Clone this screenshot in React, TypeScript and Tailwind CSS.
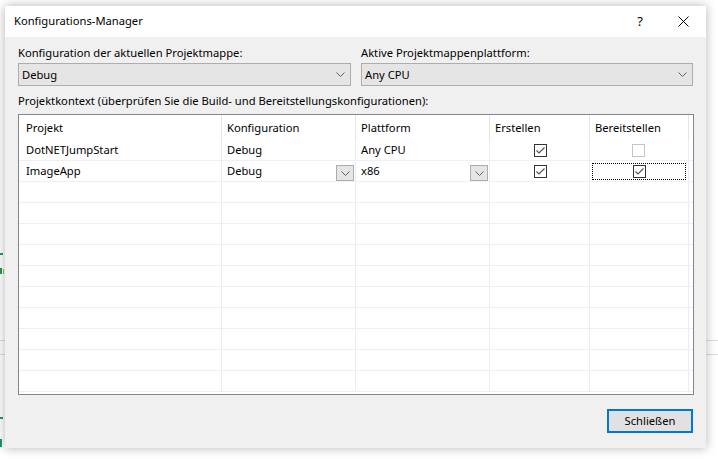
import React from "react";

const font = { fontFamily: '"Noto Sans", "Segoe UI", Arial, sans-serif' };

function Chevron({ className = "" }: { className?: string }) {
  return (
    <svg width="9" height="5" viewBox="0 0 9 5" className={className}>
      <path d="M0.5 0.5 L4.5 4.5 L8.5 0.5" fill="none" stroke="#606060" strokeWidth="1" />
    </svg>
  );
}

function Combo({ value }: { value: string }) {
  return (
    <div className="flex h-[23px] items-center justify-between border border-[#adadad] bg-[#e5e5e5] pl-[3px] pr-[5px] text-black">
      <span>{value}</span>
      <Chevron />
    </div>
  );
}

function Check({ checked, disabled }: { checked: boolean; disabled?: boolean }) {
  return (
    <div
      className={
        disabled
          ? "flex h-[13px] w-[13px] items-center justify-center border border-[#c4c4c4] bg-white"
          : "flex h-[13px] w-[13px] items-center justify-center border border-[#333333] bg-white"
      }
    >
      {checked && (
        <svg width="11" height="11" viewBox="0 0 11 11">
          <path d="M1.5 5.5 L4 8 L9.5 2.5" fill="none" stroke="#555555" strokeWidth="1.2" />
        </svg>
      )}
    </div>
  );
}

function CellDrop() {
  return (
    <div className="mt-[4px] flex h-[16px] w-[18px] items-center justify-center self-start border border-[#adadad] bg-[#e5e5e5]">
      <Chevron />
    </div>
  );
}

const rowGrid = "grid grid-cols-[203px_134px_134px_100px_99px_4px]";

export default function App() {
  const emptyRows = Array.from({ length: 10 });

  return (
    <div className="relative h-[459px] w-[718px] overflow-hidden bg-white" style={font}>
      {/* Reste des Fensters hinter dem Dialog */}
      <div className="absolute left-0 top-[340px] h-px w-[718px] bg-[#dcdcdc]" />
      <div className="absolute left-0 top-[354px] h-px w-[718px] bg-[#dcdcdc]" />
      <div className="absolute left-0 top-[253px] h-[2px] w-[3px] bg-[#1a9a6a]" />
      <div className="absolute left-0 top-[268px] h-[6px] w-[2px] bg-[#1a9a6a]" />
      <div className="absolute left-[3px] top-[269px] h-[5px] w-[1px] bg-[#d8b020]" />
      <div className="absolute left-0 top-[417px] h-[2px] w-[3px] bg-[#1a9a6a]" />
      <div className="absolute left-0 top-[439px] h-[8px] w-[2px] bg-[#1a9a6a]" />

      <div className="absolute left-[5px] top-[6px] flex h-[442px] w-[701px] flex-col bg-[#f0f0f0] text-[11.2px] shadow-[0_0_10px_rgba(0,0,0,0.3)]">
        <div className="flex h-[31px] items-center justify-between bg-white pl-[9px] pr-[17px] text-black">
          <span>Konfigurations-Manager</span>
          <div className="flex items-center gap-[35px]">
            <span className="text-[13px]">?</span>
            <svg width="11" height="11" viewBox="0 0 11 11">
              <path d="M0.5 0.5 L10.5 10.5 M10.5 0.5 L0.5 10.5" stroke="#000" strokeWidth="1" />
            </svg>
          </div>
        </div>

        <div className="flex flex-col px-[13px] pt-[8px] leading-[16px] text-black">
          <div className="flex gap-[10px]">
            <div className="flex w-[333px] flex-col gap-[2px]">
              <span>Konfiguration der aktuellen Projektmappe:</span>
              <Combo value="Debug" />
            </div>
            <div className="flex w-[332px] flex-col gap-[2px]">
              <span>Aktive Projektmappenplattform:</span>
              <Combo value="Any CPU" />
            </div>
          </div>

          <span className="mt-[7px]">
            Projektkontext (überprüfen Sie die Build- und Bereitstellungskonfigurationen):
          </span>

          <div className="mt-[5px] h-[281px] w-[676px] overflow-hidden border border-[#828790] bg-white">
            <div className={`${rowGrid} h-[25px]`}>
              <div className="flex items-center border-r border-[#e5e5e5] pl-[7px] pt-[1px]">Projekt</div>
              {["Konfiguration", "Plattform", "Erstellen", "Bereitstellen"].map((h) => (
                <div key={h} className="flex items-center border-r border-[#e5e5e5] pl-[5px] pt-[1px]">
                  {h}
                </div>
              ))}
              <div />
            </div>

            <div className={`${rowGrid} h-[21px] border-b border-[#f0f0f0]`}>
              <div className="flex items-center border-r border-[#e8eef7] pl-[7px]">DotNETJumpStart</div>
              <div className="flex items-center border-r border-[#e8eef7] pl-[5px]">Debug</div>
              <div className="flex items-center border-r border-[#e8eef7] pl-[5px]">Any CPU</div>
              <div className="flex items-center justify-center border-r border-[#e8eef7] pl-[1px]">
                <Check checked />
              </div>
              <div className="flex items-center justify-center border-r border-[#e8eef7] pr-[1px]">
                <Check checked={false} disabled />
              </div>
              <div />
            </div>

            <div className={`${rowGrid} h-[21px] border-b border-[#f0f0f0]`}>
              <div className="flex items-center border-r border-[#e8eef7] pl-[7px]">ImageApp</div>
              <div className="flex items-center justify-between border-r border-[#e8eef7] pl-[5px] pr-[1px]">
                <span>Debug</span>
                <CellDrop />
              </div>
              <div className="flex items-center justify-between border-r border-[#e8eef7] pl-[5px] pr-[1px]">
                <span>x86</span>
                <CellDrop />
              </div>
              <div className="flex items-center justify-center border-r border-[#e8eef7] pl-[1px]">
                <Check checked />
              </div>
              <div className="border-r border-[#e8eef7] pb-[1px] pl-[2px] pr-[2px] pt-[2px]">
                <div className="flex h-full items-center justify-center border border-dotted border-black">
                  <Check checked />
                </div>
              </div>
              <div />
            </div>

            {emptyRows.map((_, i) => (
              <div key={i} className={`${rowGrid} h-[21px] border-b border-[#f0f0f0]`}>
                <div className="border-r border-[#e8eef7]" />
                <div className="border-r border-[#e8eef7]" />
                <div className="border-r border-[#e8eef7]" />
                <div className="border-r border-[#e8eef7]" />
                <div className="border-r border-[#e8eef7]" />
                <div />
              </div>
            ))}
          </div>

          <div className="mt-[14px] flex justify-end">
            <button className="flex h-[24px] w-[86px] items-center justify-center border-2 border-[#0078d7] bg-[#e1e1e1] text-black">
              Schließen
            </button>
          </div>
        </div>
      </div>
    </div>
  );
}
